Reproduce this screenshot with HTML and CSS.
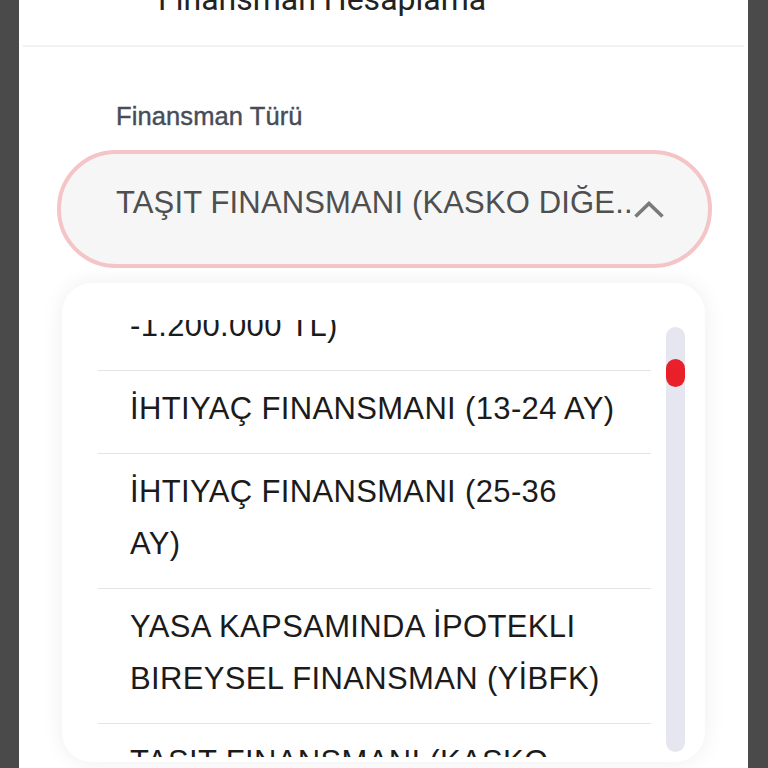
FILE: index.html
```html
<!DOCTYPE html>
<html lang="tr">
<head>
<meta charset="utf-8">
<title>Finansman Hesaplama</title>
<link rel="stylesheet" href="styles.css">
</head>
<body>
<div class="panel">
  <header class="header">
    <h1 class="title">Finansman Hesaplama</h1>
  </header>
  <section class="form">
    <label class="label">Finansman Türü</label>
    <div class="select">
      <span class="select-text">TAŞIT FINANSMANI (KASKO DIĞE..</span>
      <svg class="chevron" width="32" height="19" viewBox="0 0 32 19">
        <polyline points="2.5,16.5 16,3.5 29.5,16.5" fill="none" stroke="#7a7a7a" stroke-width="3.6" stroke-linejoin="miter"/>
      </svg>
    </div>
    <div class="dropdown">
      <div class="list">
        <ul class="items">
          <li class="item">TAŞIT FINANSMANI (KASKO DEĞERİ 400.001<br>-1.200.000 TL)</li>
          <li class="item">İHTIYAÇ FINANSMANI (13-24 AY)</li>
          <li class="item">İHTIYAÇ FINANSMANI (25-36<br>AY)</li>
          <li class="item">YASA KAPSAMINDA İPOTEKLI<br>BIREYSEL FINANSMAN (YİBFK)</li>
          <li class="item">TAŞIT FINANSMANI (KASKO<br>DEĞERİ 1.200.001 TL VE ÜZERİ)</li>
        </ul>
      </div>
      <div class="track"><div class="thumb"></div></div>
    </div>
  </section>
</div>
</body>
</html>
```

FILE: styles.css
```css
html, body {
  margin: 0;
  padding: 0;
}
body {
  background: #4a4a4a;
  height: 768px;
  overflow: hidden;
  font-family: "Liberation Sans", Arial, sans-serif;
}
.panel {
  margin-left: 19px;
  width: 729px;
  height: 768px;
  background: #ffffff;
  overflow: hidden;
}
.header {
  display: flow-root;
  height: 45px;
  margin: 0 4px;
  border-bottom: 2px solid #f2f2f2;
}
.title {
  margin: -17px 0 0 0;
  padding-left: 135px;
  font-family: Roboto, "Liberation Sans", sans-serif;
  font-weight: 400;
  font-size: 32px;
  line-height: 32px;
  color: #222222;
  white-space: nowrap;
}
.form {
  display: flex;
  flex-direction: column;
}
.label {
  margin: 54px 0 0 97px;
  font-size: 25.5px;
  line-height: 30px;
  color: #474c57;
  font-weight: 400;
  letter-spacing: 0.1px;
  -webkit-text-stroke: 0.4px #474c57;
}
.select {
  box-sizing: border-box;
  margin: 19px 36px 0 38px;
  height: 118px;
  border: 4px solid #f4c4c7;
  border-radius: 59px;
  background: #f6f6f6;
  display: flex;
  align-items: center;
  padding-left: 55px;
}
.select-text {
  font-size: 31px;
  line-height: 52px;
  color: #4f4f4f;
  letter-spacing: 0.15px;
  white-space: nowrap;
  margin-bottom: 12px;
}
.chevron {
  margin-left: 0;
  flex: none;
}
.dropdown {
  margin: 15px 43px 0 43px;
  height: 479px;
  box-sizing: border-box;
  padding: 37px 20px 5px 36px;
  background: #ffffff;
  border-radius: 30px;
  box-shadow: 0 0 22px rgba(0, 0, 0, 0.07);
  display: flex;
  gap: 15px;
}
.list {
  flex: 1;
  height: 437px;
  overflow: hidden;
}
.items {
  list-style: none;
  margin: -84px 0 0 0;
  padding: 0;
}
.item {
  padding: 12px 0 18px 32px;
  border-bottom: 1px solid #e4e4e4;
  font-size: 31px;
  line-height: 52px;
  letter-spacing: 0.35px;
  color: #1b1b1b;
  white-space: nowrap;
}
.track {
  width: 19px;
  margin: 7px 0 5px 0;
  background: #e5e6f0;
  border-radius: 10px;
  display: flex;
  flex-direction: column;
}
.thumb {
  margin-top: 32px;
  height: 28px;
  background: #e8202a;
  border-radius: 10px;
}
```
